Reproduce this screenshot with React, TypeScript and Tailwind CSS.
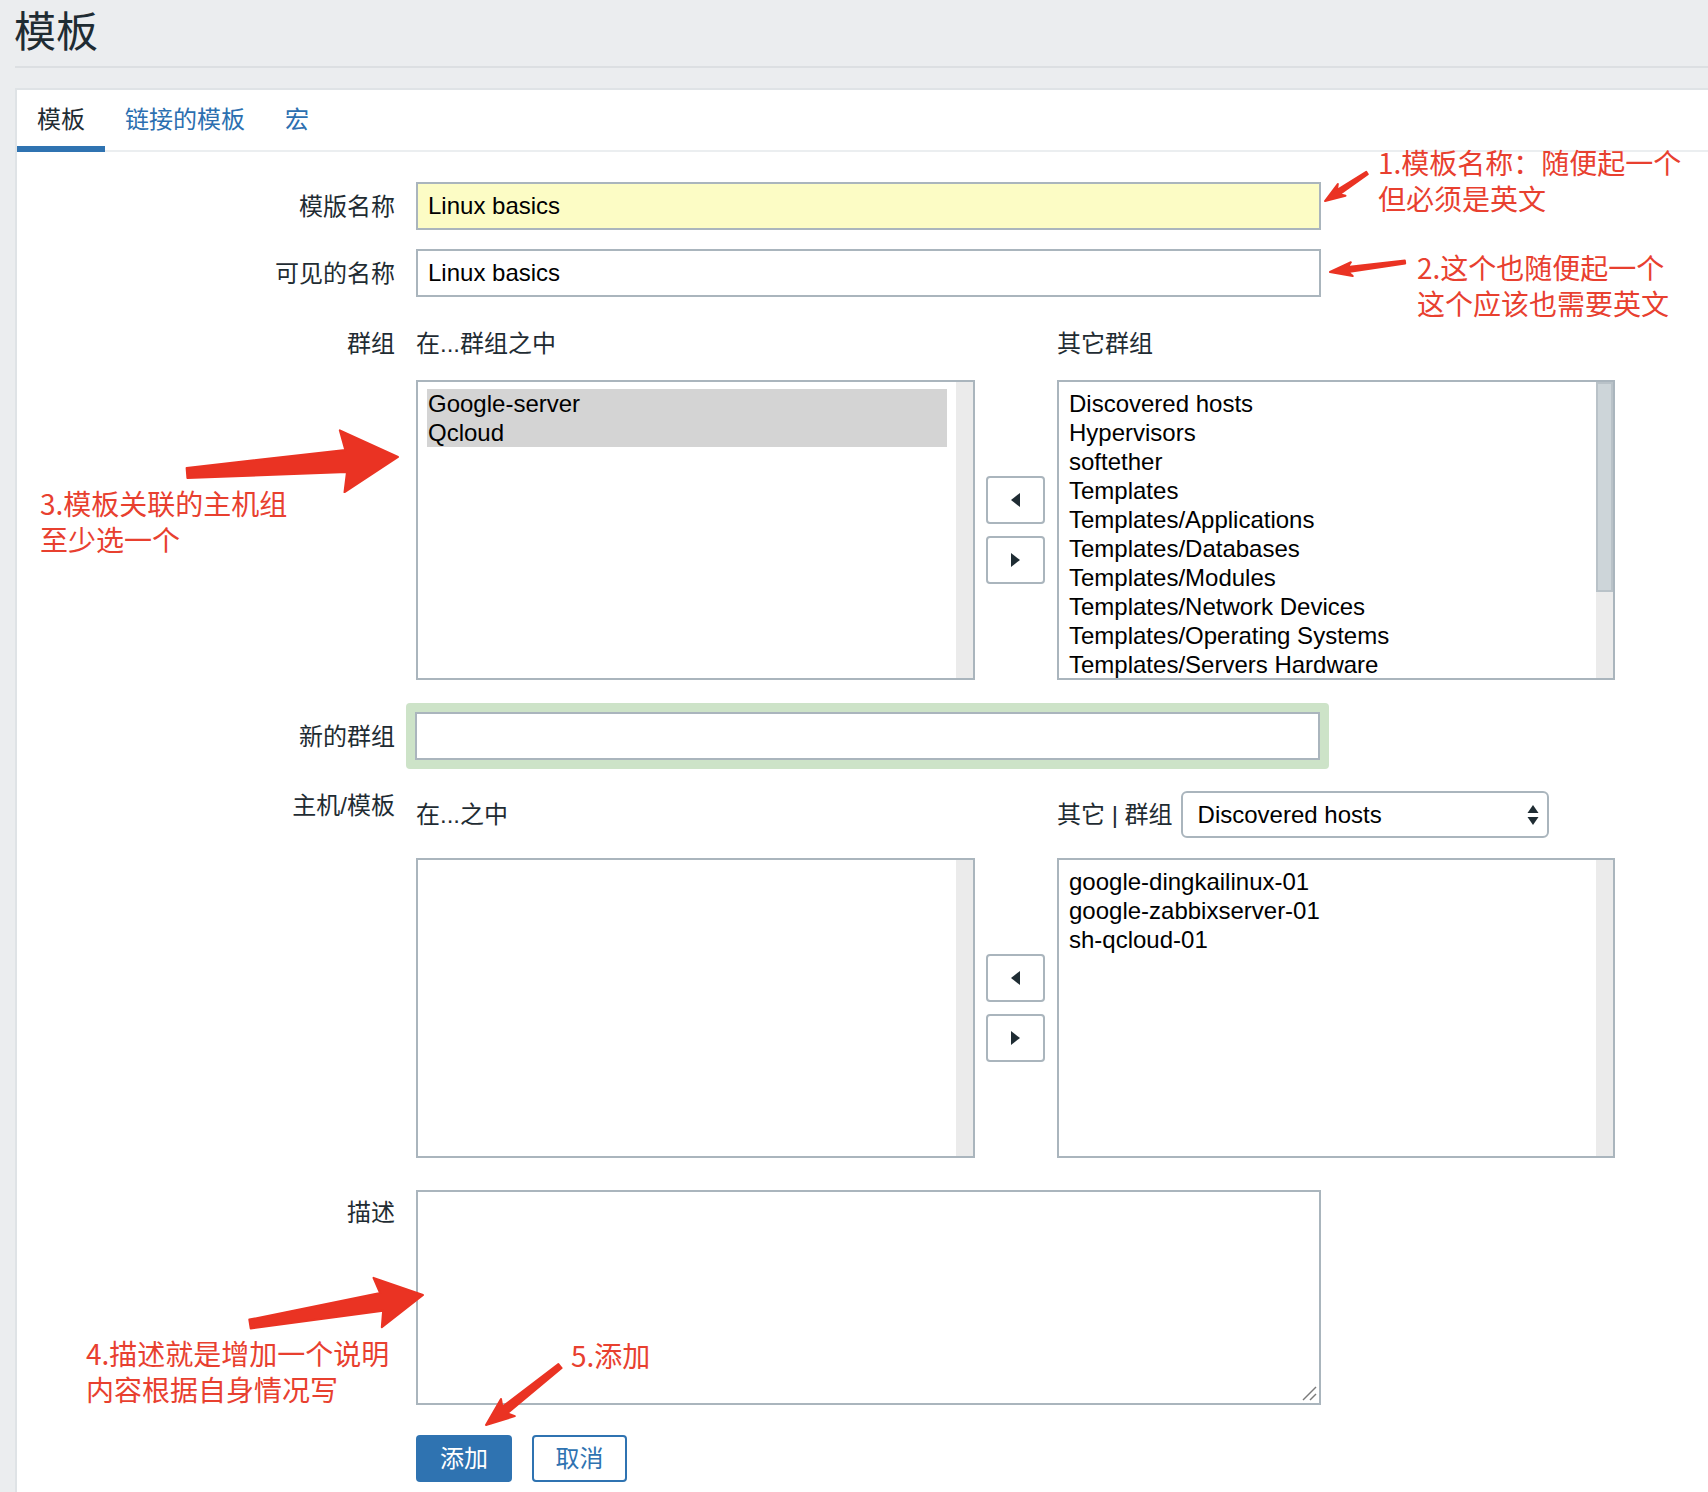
import React from "react";

type Pt = [number, number];

function arrowPoints(
  tx: number,
  ty: number,
  px: number,
  py: number,
  w0: number,
  w1: number,
  hl: number,
  hw: number
): string {
  const dx = px - tx;
  const dy = py - ty;
  const L = Math.hypot(dx, dy);
  const ux = dx / L;
  const uy = dy / L;
  const nx = -uy;
  const ny = ux;
  const bx = px - ux * hl;
  const by = py - uy * hl;
  const pts: Pt[] = [
    [tx + (nx * w0) / 2, ty + (ny * w0) / 2],
    [bx + (nx * w1) / 2, by + (ny * w1) / 2],
    [bx - ux * 4 + (nx * hw) / 2, by - uy * 4 + (ny * hw) / 2],
    [px, py],
    [bx - ux * 4 - (nx * hw) / 2, by - uy * 4 - (ny * hw) / 2],
    [bx - (nx * w1) / 2, by - (ny * w1) / 2],
    [tx - (nx * w0) / 2, ty - (ny * w0) / 2],
  ];
  return pts.map((p) => `${p[0].toFixed(1)},${p[1].toFixed(1)}`).join(" ");
}

function ListBox({
  width,
  items,
  selected = 0,
  thumb = false,
}: {
  width: string;
  items: string[];
  selected?: number;
  thumb?: boolean;
}) {
  return (
    <div className={`${width} h-[300px] border-2 border-[#aab5bd] bg-white flex`}>
      <div className="flex-1 pt-[7px] px-[10px] overflow-hidden">
        {items.map((it, i) => (
          <div
            key={it}
            className={`text-[24px] leading-[29px] whitespace-nowrap text-black ${
              i < selected ? "bg-[#d4d4d4] -mx-[1px] px-[1px]" : ""
            }`}
          >
            {it}
          </div>
        ))}
      </div>
      <div className="w-[17px] shrink-0 bg-[#ebebeb] flex flex-col">
        {thumb && <div className="h-[210px] bg-[#cdd5d9] border-2 border-[#b9c2c8]"></div>}
      </div>
    </div>
  );
}

function ArrowButtons() {
  return (
    <div className="w-[59px] h-[300px] flex flex-col justify-center gap-[12px]">
      <div className="h-[48px] border-2 border-[#aab5bd] rounded-[4px] bg-white flex items-center justify-center">
        <svg width="9" height="14" viewBox="0 0 9 14">
          <polygon points="9,0 9,14 0,7" fill="#1f2c33" />
        </svg>
      </div>
      <div className="h-[48px] border-2 border-[#aab5bd] rounded-[4px] bg-white flex items-center justify-center">
        <svg width="9" height="14" viewBox="0 0 9 14">
          <polygon points="0,0 9,7 0,14" fill="#1f2c33" />
        </svg>
      </div>
    </div>
  );
}

export default function App() {
  const otherGroups = [
    "Discovered hosts",
    "Hypervisors",
    "softether",
    "Templates",
    "Templates/Applications",
    "Templates/Databases",
    "Templates/Modules",
    "Templates/Network Devices",
    "Templates/Operating Systems",
    "Templates/Servers Hardware",
  ];
  const hosts = ["google-dingkailinux-01", "google-zabbixserver-01", "sh-qcloud-01"];

  return (
    <div className="relative w-[1708px] h-[1492px] overflow-hidden bg-[#ebedef] font-['Liberation_Sans','Noto_Sans_CJK_SC',sans-serif] text-[#1f2c33]">
      {/* header */}
      <div className="h-[66px] pl-[14px] text-[42px] leading-[58px] font-['Noto_Sans_CJK_SC',sans-serif]">模板</div>
      <div className="ml-[15px] h-[2px] bg-[#dcdfe2]"></div>

      {/* panel */}
      <div className="mt-[20px] ml-[15px] h-[1410px] bg-white border-l-2 border-t-2 border-[#dfe3e6]">
        {/* tabs */}
        <div className="flex h-[62px] border-b-2 border-[#ebeef0] text-[24px]">
          <div className="relative h-[60px] px-[20px] pb-[1px] flex items-center text-[#1f2c33]">
            模板
            <span className="absolute left-0 right-0 bottom-[-2px] h-[6px] bg-[#2f73b1]"></span>
          </div>
          <div className="h-[60px] px-[20px] pb-[1px] flex items-center text-[#2c6fb0]">链接的模板</div>
          <div className="h-[60px] px-[20px] pb-[1px] flex items-center text-[#2c6fb0]">宏</div>
        </div>

        {/* form */}
        <div className="pt-[30px] text-[24px]">
          {/* row 1 */}
          <div className="flex items-center h-[48px]">
            <div className="w-[378px] text-right leading-[29px]">模版名称</div>
            <div className="ml-[21px] w-[905px] h-[48px] border-2 border-[#aab5bd] bg-[#fcfcc5] pl-[10px] flex items-center text-black">
              Linux basics
            </div>
          </div>

          {/* row 2 */}
          <div className="mt-[19px] flex items-center h-[48px]">
            <div className="w-[378px] text-right leading-[29px]">可见的名称</div>
            <div className="ml-[21px] w-[905px] h-[48px] border-2 border-[#aab5bd] bg-white pl-[10px] flex items-center text-black">
              Linux basics
            </div>
          </div>

          {/* row 3 groups */}
          <div className="mt-[32px] flex items-start">
            <div className="w-[378px] text-right leading-[29px]">群组</div>
            <div className="ml-[21px] flex flex-col">
              <div className="flex h-[29px] leading-[29px]">
                <div className="w-[641px]">在...群组之中</div>
                <div>其它群组</div>
              </div>
              <div className="mt-[22px] flex">
                <ListBox width="w-[559px]" items={["Google-server", "Qcloud"]} selected={2} />
                <div className="ml-[11px]">
                  <ArrowButtons />
                </div>
                <div className="ml-[12px]">
                  <ListBox width="w-[558px]" items={otherGroups} thumb />
                </div>
              </div>
            </div>
          </div>

          {/* row 4 new group */}
          <div className="mt-[23px] flex items-center">
            <div className="w-[378px] text-right leading-[29px]">新的群组</div>
            <div className="ml-[11px] p-[9px] rounded-[4px] bg-[#cde3c8]">
              <div className="w-[905px] h-[48px] border-2 border-[#aab5bd] bg-white"></div>
            </div>
          </div>

          {/* row 5 hosts/templates */}
          <div className="mt-[22px] flex items-start">
            <div className="w-[378px] text-right leading-[29px]">主机/模板</div>
            <div className="ml-[21px] flex flex-col">
              <div className="flex h-[47px] items-center">
                <div className="w-[641px] leading-[29px]">在...之中</div>
                <div className="leading-[29px]">其它 | 群组</div>
                <div className="ml-[8px] w-[368px] h-[47px] border-2 border-[#aab5bd] rounded-[6px] bg-white flex items-center pl-[15px] pr-[8px] text-black">
                  <span className="flex-1">Discovered hosts</span>
                  <svg width="12" height="22" viewBox="0 0 12 22">
                    <polygon points="6,1 11.5,9 0.5,9" fill="#1f2c33" />
                    <polygon points="0.5,13 11.5,13 6,21" fill="#1f2c33" />
                  </svg>
                </div>
              </div>
              <div className="mt-[20px] flex">
                <ListBox width="w-[559px]" items={[]} />
                <div className="ml-[11px]">
                  <ArrowButtons />
                </div>
                <div className="ml-[12px]">
                  <ListBox width="w-[558px]" items={hosts} />
                </div>
              </div>
            </div>
          </div>

          {/* row 6 description */}
          <div className="mt-[32px] flex items-start">
            <div className="w-[378px] text-right leading-[29px] pt-[8px]">描述</div>
            <div className="ml-[21px] relative w-[905px] h-[215px] border-2 border-[#aab5bd] bg-white">
              <svg className="absolute right-[2px] bottom-[2px]" width="16" height="16" viewBox="0 0 16 16">
                <line x1="2" y1="15" x2="15" y2="2" stroke="#7a7a7a" strokeWidth="1.5" />
                <line x1="9" y1="15" x2="15" y2="9" stroke="#7a7a7a" strokeWidth="1.5" />
              </svg>
            </div>
          </div>

          {/* buttons */}
          <div className="mt-[30px] flex pl-[399px]">
            <div className="w-[96px] h-[47px] rounded-[4px] bg-[#2f73b1] text-white flex items-center justify-center">添加</div>
            <div className="ml-[20px] w-[95px] h-[47px] rounded-[4px] border-2 border-[#2f73b1] bg-white text-[#2f73b1] flex items-center justify-center">
              取消
            </div>
          </div>
        </div>
      </div>

      {/* annotation arrows */}
      <svg className="absolute left-0 top-0 pointer-events-none" width="1708" height="1492" viewBox="0 0 1708 1492">
        <g fill="#ea3323" stroke="#ea3323" strokeWidth="2" strokeLinejoin="round">
          <polygon points={arrowPoints(1367, 173, 1325, 201, 3, 5, 16, 14)} />
          <polygon points={arrowPoints(1405, 262, 1330, 272, 3, 5, 18, 14)} />
          <polygon points={arrowPoints(187, 473, 398, 457, 10, 22, 52, 62)} />
          <polygon points={arrowPoints(250, 1324, 423, 1295, 9, 18, 42, 50)} />
          <polygon points={arrowPoints(560, 1366, 486, 1425, 5, 8, 24, 22)} />
        </g>
      </svg>

      {/* annotation texts */}
      <div className="absolute left-[1378px] top-[144px] text-[28px] leading-[36px] text-[#e8402f] font-['Noto_Sans_CJK_SC',sans-serif] whitespace-nowrap">
        1.模板名称：随便起一个
        <br />
        但必须是英文
      </div>
      <div className="absolute left-[1417px] top-[249px] text-[28px] leading-[36px] text-[#e8402f] font-['Noto_Sans_CJK_SC',sans-serif] whitespace-nowrap">
        2.这个也随便起一个
        <br />
        这个应该也需要英文
      </div>
      <div className="absolute left-[40px] top-[485px] text-[28px] leading-[36px] text-[#e8402f] font-['Noto_Sans_CJK_SC',sans-serif] whitespace-nowrap">
        3.模板关联的主机组
        <br />
        至少选一个
      </div>
      <div className="absolute left-[86px] top-[1335px] text-[28px] leading-[36px] text-[#e8402f] font-['Noto_Sans_CJK_SC',sans-serif] whitespace-nowrap">
        4.描述就是增加一个说明
        <br />
        内容根据自身情况写
      </div>
      <div className="absolute left-[571px] top-[1337px] text-[28px] leading-[36px] text-[#e8402f] font-['Noto_Sans_CJK_SC',sans-serif] whitespace-nowrap">
        5.添加
      </div>
    </div>
  );
}
